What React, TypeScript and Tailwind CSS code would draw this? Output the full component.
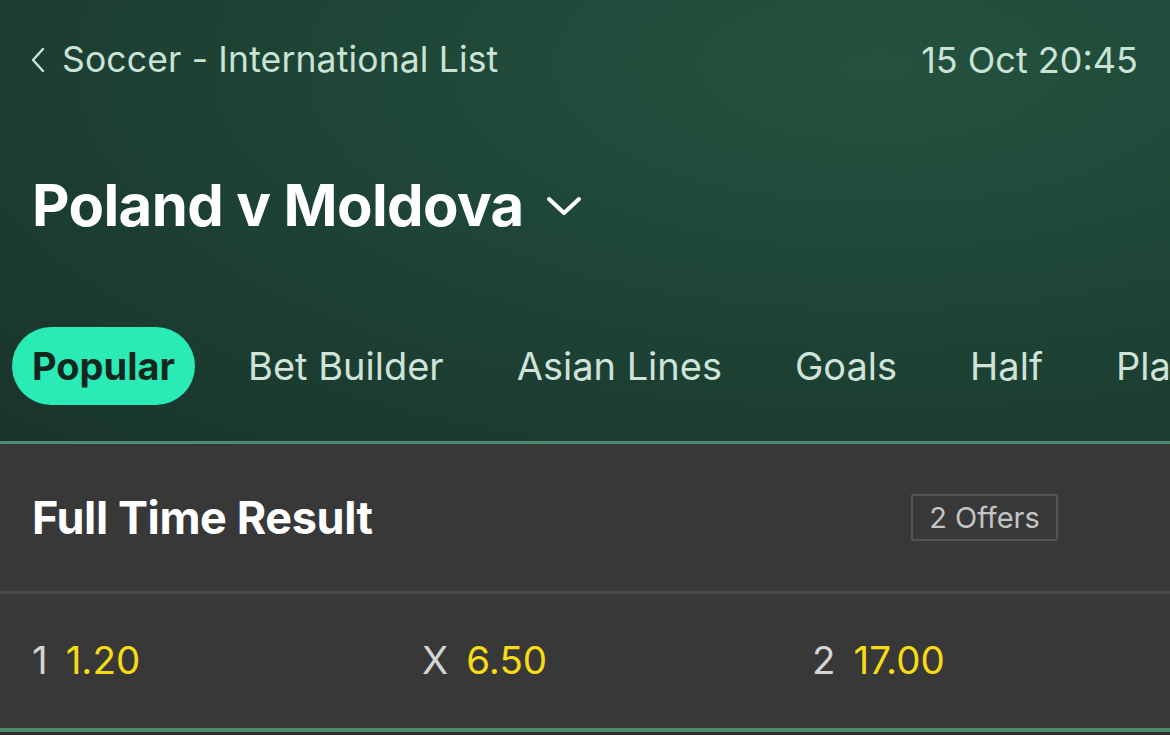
const tabs = ["Popular", "Bet Builder", "Asian Lines", "Goals", "Half", "Player"];

const odds = [
  { label: "1", price: "1.20" },
  { label: "X", price: "6.50" },
  { label: "2", price: "17.00" },
];

export default function App() {
  return (
    <div
      className="h-[735px] w-[1170px] overflow-hidden bg-[#383838]"
      style={{ fontFamily: "Inter, 'Noto Sans', 'Liberation Sans', sans-serif" }}
    >
      <header className="bg-[radial-gradient(ellipse_at_75%_15%,#24523f_0%,#1e4536_45%,#19342b_100%)]">
        <div className="flex h-[120px] items-center justify-between pl-[30px] pr-8 text-[35.5px] text-[#c9e3d6]">
          <div className="flex items-center gap-[16px]">
            <svg width="16" height="26" viewBox="0 0 16 26" fill="none">
              <polyline points="13,2 3,13 13,24" stroke="#c9e3d6" strokeWidth="2.4" strokeLinecap="round" strokeLinejoin="round" />
            </svg>
            <span className="tracking-[0.15px]">Soccer - International List</span>
          </div>
          <span className="text-[36px]">15 Oct 20:45</span>
        </div>

        <div className="flex h-[170px] items-center gap-[22px] px-8">
          <h1 className="text-[58px] font-bold tracking-[-0.6px] text-white">Poland v Moldova</h1>
          <svg width="36" height="22" viewBox="0 0 36 22" fill="none" className="mt-[2px]">
            <polyline points="3,4 18,18 33,4" stroke="white" strokeWidth="4" strokeLinecap="round" strokeLinejoin="round" />
          </svg>
        </div>

        <nav className="flex h-[151px] items-start gap-[33px] whitespace-nowrap pl-3 pt-[37px]">
          {tabs.map((tab, i) => (
            <span
              key={tab}
              className={
                i === 0
                  ? "flex h-[78px] items-center rounded-full bg-[#2aeab6] px-5 text-[38px] font-bold text-[#14271f]"
                  : "flex h-[78px] items-center px-5 text-[38px] text-[#cfe3d9]"
              }
            >
              {tab}
            </span>
          ))}
        </nav>
      </header>

      <div className="h-[3px] bg-[#4d8a70]" />

      <section className="flex h-[147px] items-center justify-between pl-8 pr-[112px]">
        <h2 className="text-[45px] font-bold tracking-[-0.4px] text-white">Full Time Result</h2>
        <span className="flex h-[47px] w-[147px] items-center justify-center rounded-[2px] border-2 border-[#545454] text-[29px] text-[#c4c4c4]">
          2 Offers
        </span>
      </section>

      <div className="h-[3px] bg-[#4a4a4a]" />

      <div className="grid h-[134px] grid-cols-3 items-center">
        {odds.map((o) => (
          <div key={o.label} className="flex items-center gap-[18px] pl-8 text-[38.5px]">
            <span className="text-[#d4d4d4]">{o.label}</span>
            <span className="text-[#f7dc14]">{o.price}</span>
          </div>
        ))}
      </div>

      <div className="h-[4px] bg-[#4d8a70]" />
      <div className="h-[10px] bg-[#2e2e2e]" />
    </div>
  );
}
